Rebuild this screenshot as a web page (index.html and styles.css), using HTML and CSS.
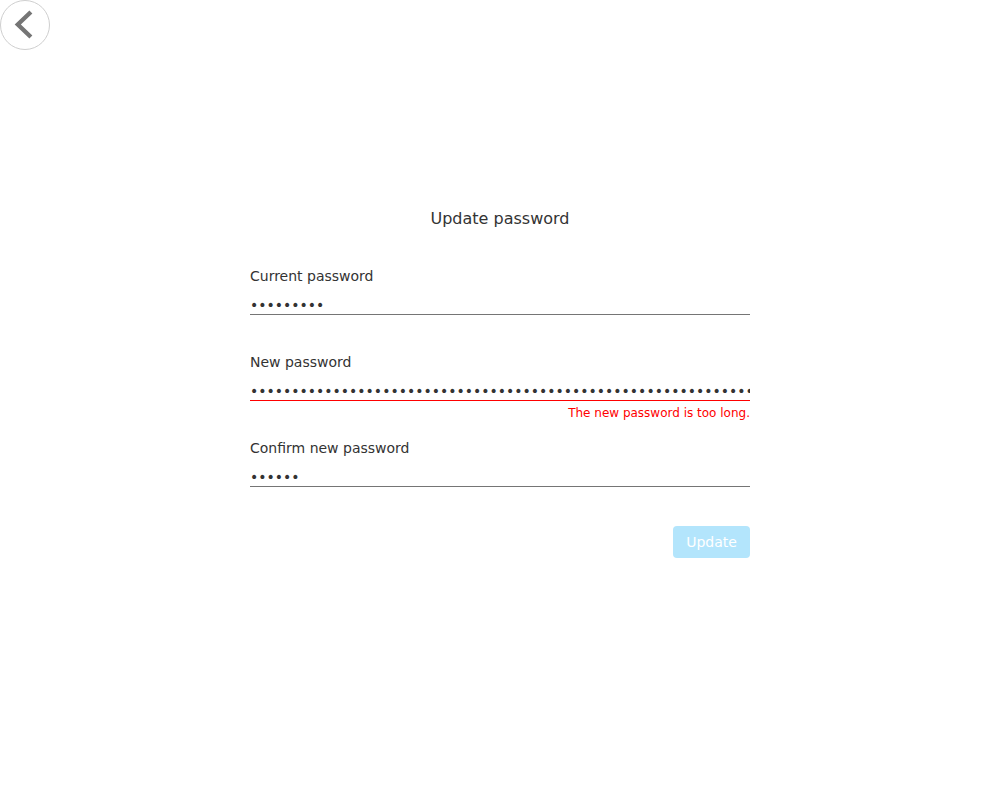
FILE: index.html
```html
<!DOCTYPE html>
<html lang="en">
<head>
<meta charset="utf-8">
<title>Update password</title>
<link rel="stylesheet" href="styles.css">
</head>
<body>
<button class="back" type="button" aria-label="Back">
  <svg width="50" height="50" viewBox="0 0 50 50"><path d="M29.5 13 L17.5 24.5 L29.5 36" fill="none" stroke="#757575" stroke-width="4.5" stroke-linecap="square"/></svg>
</button>
<main class="form">
  <h1 class="title">Update password</h1>
  <div class="field">
    <label class="label" for="cur">Current password</label>
    <input class="input" id="cur" type="password" value="123456789">
    <div class="error"></div>
  </div>
  <div class="field">
    <label class="label" for="new">New password</label>
    <input class="input invalid" id="new" type="password" value="12345678901234567890123456789012345678901234567890123456789012345678901234567890">
    <div class="error">The new password is too long.</div>
  </div>
  <div class="field">
    <label class="label" for="conf">Confirm new password</label>
    <input class="input" id="conf" type="password" value="123456">
    <div class="error"></div>
  </div>
  <div class="actions">
    <button class="submit" type="button" disabled>Update</button>
  </div>
</main>
</body>
</html>
```
FILE: styles.css
```css
html, body {
  margin: 0;
  padding: 0;
  background: #fff;
  font-family: "DejaVu Sans", sans-serif;
  color: #333;
}
.back {
  position: absolute;
  left: 0;
  top: 0;
  width: 50px;
  height: 50px;
  padding: 0;
  margin: 0;
  border: 1px solid #cfcfcf;
  border-radius: 50%;
  background: #fff;
  box-sizing: border-box;
  display: flex;
  align-items: center;
  justify-content: center;
  cursor: pointer;
}
.back svg { display: block; }
.form {
  width: 500px;
  margin: 0 auto;
  padding-top: 208px;
  display: flex;
  flex-direction: column;
}
.title {
  margin: 0 0 36px;
  font-size: 16px;
  line-height: 22px;
  font-weight: normal;
  text-align: center;
  color: #333;
}
.field {
  display: flex;
  flex-direction: column;
}
.label {
  font-size: 14px;
  line-height: 20px;
  color: #333;
}
.input {
  margin-top: 4px;
  height: 25px;
  box-sizing: border-box;
  padding: 6px 0 0;
  border: none;
  border-bottom: 1px solid #757575;
  outline: none;
  font-family: "DejaVu Sans", sans-serif;
  font-size: 14px;
  line-height: 18px;
  color: #333;
  background: transparent;
  width: 100%;
}
.input.invalid { border-bottom-color: #ff0000; }
.error {
  margin-top: 4px;
  height: 16px;
  margin-bottom: 17px;
  font-size: 12px;
  line-height: 16px;
  color: #ff0000;
  text-align: right;
}
.actions {
  display: flex;
  justify-content: flex-end;
  margin-top: 2px;
}
.submit {
  width: 77px;
  height: 32px;
  border: none;
  border-radius: 4px;
  background: #b3e5fc;
  color: #fff;
  font-family: "DejaVu Sans", sans-serif;
  font-size: 14px;
  padding: 0;
}
```
